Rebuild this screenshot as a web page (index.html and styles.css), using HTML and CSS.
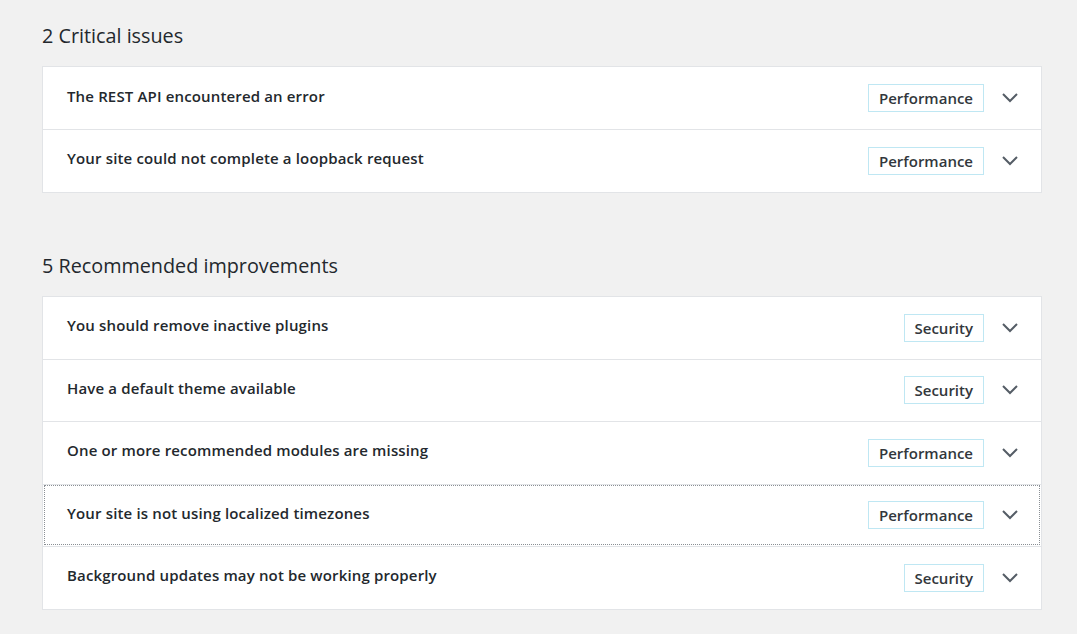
FILE: index.html
```html
<!DOCTYPE html>
<html lang="en">
<head>
<meta charset="utf-8">
<title>Site Health</title>
<link rel="stylesheet" href="styles.css">
</head>
<body>
<main class="page">
  <section class="group">
    <h2 class="group-title">2 Critical issues</h2>
    <div class="accordion">
      <div class="row"><span class="title">The REST API encountered an error</span><span class="badge">Performance</span><svg class="chev" viewBox="0 0 16 10" width="16" height="10"><polyline points="1,1 8,8 15,1"/></svg></div>
      <div class="row"><span class="title">Your site could not complete a loopback request</span><span class="badge">Performance</span><svg class="chev" viewBox="0 0 16 10" width="16" height="10"><polyline points="1,1 8,8 15,1"/></svg></div>
    </div>
  </section>
  <section class="group group-second">
    <h2 class="group-title">5 Recommended improvements</h2>
    <div class="accordion">
      <div class="row"><span class="title">You should remove inactive plugins</span><span class="badge">Security</span><svg class="chev" viewBox="0 0 16 10" width="16" height="10"><polyline points="1,1 8,8 15,1"/></svg></div>
      <div class="row"><span class="title">Have a default theme available</span><span class="badge">Security</span><svg class="chev" viewBox="0 0 16 10" width="16" height="10"><polyline points="1,1 8,8 15,1"/></svg></div>
      <div class="row"><span class="title">One or more recommended modules are missing</span><span class="badge">Performance</span><svg class="chev" viewBox="0 0 16 10" width="16" height="10"><polyline points="1,1 8,8 15,1"/></svg></div>
      <div class="row focused"><span class="title">Your site is not using localized timezones</span><span class="badge">Performance</span><svg class="chev" viewBox="0 0 16 10" width="16" height="10"><polyline points="1,1 8,8 15,1"/></svg></div>
      <div class="row"><span class="title">Background updates may not be working properly</span><span class="badge">Security</span><svg class="chev" viewBox="0 0 16 10" width="16" height="10"><polyline points="1,1 8,8 15,1"/></svg></div>
    </div>
  </section>
</main>
</body>
</html>
```
FILE: styles.css
```css
html, body {
  margin: 0;
  padding: 0;
  background: #f1f1f1;
}
body {
  font-family: "Open Sans", "Noto Sans", sans-serif;
  color: #23282d;
}
.page {
  width: 1000px;
  padding: 23px 0 0 42px;
}
.group-title {
  margin: 0 0 17px 0;
  font-size: 19.8px;
  font-weight: 400;
  line-height: 26px;
  color: #23282d;
}
.group-second {
  margin-top: 60px;
}
.accordion {
  background: #fff;
  border: 1px solid #e2e4e7;
}
.row {
  display: flex;
  align-items: center;
  box-sizing: border-box;
  height: 62.5px;
  padding: 0 23px 0 24px;
  border-top: 1px solid #e2e4e7;
}
.row:first-child {
  border-top: none;
  height: 62px;
}
.row.focused {
  outline: 1px dotted #8a8f94;
  outline-offset: -2px;
}
.title {
  flex: 1;
  font-size: 15px;
  letter-spacing: 0.15px;
  font-weight: 600;
  color: #23282d;
  margin-top: -5px;
}
.badge {
  box-sizing: border-box;
  height: 28px;
  display: flex;
  align-items: center;
  padding: 0 10px;
  border: 1px solid #bfe7f3;
  font-size: 15px;
  font-weight: 600;
  color: #32373c;
}
.chev {
  margin-left: 18px;
  fill: none;
  stroke: #555d66;
  stroke-width: 2;
}
```
